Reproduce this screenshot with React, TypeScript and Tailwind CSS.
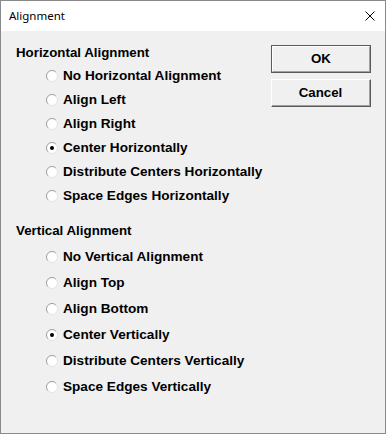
import React from "react";

const horizontalOptions = [
  "No Horizontal Alignment",
  "Align Left",
  "Align Right",
  "Center Horizontally",
  "Distribute Centers Horizontally",
  "Space Edges Horizontally",
];

const verticalOptions = [
  "No Vertical Alignment",
  "Align Top",
  "Align Bottom",
  "Center Vertically",
  "Distribute Centers Vertically",
  "Space Edges Vertically",
];

function RadioDot({ checked }: { checked: boolean }) {
  return (
    <svg width="12" height="12" viewBox="0 0 12 12" className="shrink-0">
      <circle cx="6" cy="6" r="5.5" fill="#ffffff" />
      <path d="M2.11 9.89 A5.5 5.5 0 0 1 9.89 2.11" fill="none" stroke="#9c9c9c" strokeWidth="1" />
      <path d="M9.89 2.11 A5.5 5.5 0 0 1 2.11 9.89" fill="none" stroke="#e2e2e2" strokeWidth="1" />
      {checked && <circle cx="6" cy="6" r="2" fill="#000000" />}
    </svg>
  );
}

function RadioRow({ label, checked, tall }: { label: string; checked: boolean; tall?: boolean }) {
  return (
    <div className={`flex items-center gap-[5px] pl-[30px] ${tall ? "h-[26px]" : "h-6"}`}>
      <RadioDot checked={checked} />
      <span className="text-[13.6px] font-bold text-black leading-none">{label}</span>
    </div>
  );
}

export default function App() {
  return (
    <div
      className="w-[386px] h-[434px] border border-[#8a8a8a] bg-[#f0f0f0] flex flex-col"
      style={{ fontFamily: '"Liberation Sans", Arial, sans-serif' }}
    >
      {/* Title bar */}
      <div className="h-[30px] bg-white flex items-center justify-between pl-2 pr-[10px] shrink-0">
        <span className="text-[11.5px] text-black" style={{ fontFamily: '"Noto Sans", "Open Sans", sans-serif' }}>
          Alignment
        </span>
        <svg width="10" height="10" viewBox="0 0 10 10">
          <path d="M0.5 0.5 L9.5 9.5 M9.5 0.5 L0.5 9.5" stroke="#000" strokeWidth="1" />
        </svg>
      </div>

      {/* Body */}
      <div className="flex justify-between pl-[15px] pr-[14px] pt-[10px]">
        <div className="flex flex-col">
          <div className="h-[23px] flex items-center text-[13.3px] font-bold text-black">Horizontal Alignment</div>
          <div className="flex flex-col">
            {horizontalOptions.map((opt) => (
              <RadioRow key={opt} label={opt} checked={opt === "Center Horizontally"} />
            ))}
          </div>
          <div className="h-5 mt-[13px] flex items-center text-[13.3px] font-bold text-black">Vertical Alignment</div>
          <div className="flex flex-col mt-[3px]">
            {verticalOptions.map((opt) => (
              <RadioRow key={opt} label={opt} checked={opt === "Center Vertically"} tall />
            ))}
          </div>
        </div>

        <div className="flex flex-col gap-[6px] mt-[4px]">
          <button className="w-[100px] h-[28px] border border-[#5a5a5a] bg-[#f0f0f0] p-0">
            <div className="w-full h-full border-t border-l border-white border-r border-b border-r-[#a0a0a0] border-b-[#a0a0a0] flex items-center justify-center text-[13.3px] font-bold text-black">
              OK
            </div>
          </button>
          <button className="w-[100px] h-[28px] border-t border-l border-white border-r border-b border-r-[#5a5a5a] border-b-[#5a5a5a] bg-[#f0f0f0] p-0">
            <div className="w-full h-full border-r border-b border-r-[#a0a0a0] border-b-[#a0a0a0] flex items-center justify-center text-[13.3px] font-bold text-black">
              Cancel
            </div>
          </button>
        </div>
      </div>
    </div>
  );
}
